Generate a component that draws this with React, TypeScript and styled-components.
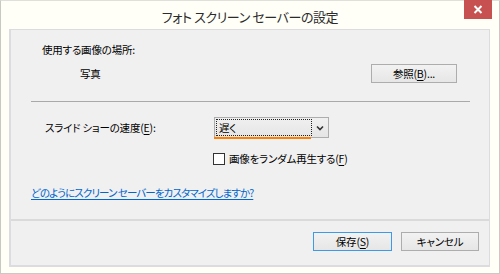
import React from "react";
import styled, { createGlobalStyle } from "styled-components";

const Global = createGlobalStyle`
  html, body { margin: 0; padding: 0; }
  body {
    width: 500px; height: 274px; overflow: hidden;
    font-family: "Noto Sans CJK JP", "Noto Sans", sans-serif;
    font-feature-settings: "palt";
    color: #000;
  }
`;

const Window = styled.div`
  box-sizing: border-box;
  width: 500px;
  height: 274px;
  background: #fffff7;
  border: 1px solid #c9c9c4;
  border-top-color: #e0e0da;
  display: flex;
  flex-direction: column;
`;

const TitleBar = styled.div`
  height: 28px;
  display: grid;
  grid-template-columns: 1fr auto 1fr;
  align-items: start;
`;

const Title = styled.div`
  grid-column: 2;
  font-size: 13px;
  line-height: 14px;
  margin-top: 9px;
  color: #2b2b2b;
  letter-spacing: -0.4px;
`;

const CloseButton = styled.div`
  grid-column: 3;
  justify-self: end;
  margin-right: 7px;
  width: 28px;
  height: 19px;
  margin-top: -1px;
  background: #c75050;
  display: flex;
  align-items: center;
  justify-content: center;
`;

const Panel = styled.div`
  box-sizing: border-box;
  margin: 0 9px 0 8px;
  height: 238px;
  background: #f0f0f0;
  border: 1px solid #dcdce0;
  border-left-width: 2px;
  border-bottom-width: 2px;
  display: flex;
  flex-direction: column;
`;

const Content = styled.div`
  flex: 1;
  display: flex;
  flex-direction: column;
  font-size: 10.5px;
  letter-spacing: -0.2px;
`;

const Row = styled.div<{ $top: number; $h: number; $left: number; $right?: number }>`
  display: flex;
  align-items: center;
  margin-top: ${(p) => p.$top}px;
  height: ${(p) => p.$h}px;
  padding-left: ${(p) => p.$left}px;
  padding-right: ${(p) => p.$right ?? 0}px;
`;

const Text = styled.span<{ $w?: number }>`
  line-height: 14px;
  white-space: nowrap;
  ${(p) => (p.$w ? `width: ${p.$w}px;` : "")}
`;

const Spacer = styled.div`
  flex: 1;
`;

const Separator = styled.div`
  height: 1px;
  margin: 17px 19px 0 20px;
  background: #a9a9a9;
`;

const PushButton = styled.div<{ $w: number; $default?: boolean }>`
  box-sizing: border-box;
  width: ${(p) => p.$w}px;
  height: 19px;
  border: 1px solid ${(p) => (p.$default ? "#3c9ae8" : "#adadad")};
  background: linear-gradient(#f2f2f2, #e6e6e6);
  display: flex;
  align-items: center;
  justify-content: center;
  font-size: 10.5px;
  letter-spacing: -0.2px;
  line-height: 14px;
  color: #000;
`;

const U = styled.span`
  text-decoration: underline;
  text-underline-offset: 2px;
`;

const Combo = styled.div`
  position: relative;
  box-sizing: border-box;
  width: 115px;
  height: 21px;
  border: 1px solid #adadad;
  background: linear-gradient(#f0f0f0, #e5e5e5);
  display: flex;
  align-items: center;
  padding: 1px;
`;

const ComboValue = styled.div`
  box-sizing: border-box;
  width: 96px;
  height: 17px;
  border: 1px dotted #222;
  display: flex;
  align-items: center;
  padding-left: 2px;
`;

const ComboArrow = styled.div`
  flex: 1;
  display: flex;
  align-items: center;
  justify-content: center;
`;

const Highlight = styled.div`
  position: absolute;
  left: -1px;
  bottom: -2px;
  width: 97px;
  height: 2px;
  background: #ff8000;
`;

const Checkbox = styled.div`
  box-sizing: border-box;
  width: 12px;
  height: 12px;
  border: 1px solid #333;
  background: #fff;
  margin-right: 4px;
`;

const Link = styled.span`
  color: #0066cc;
  text-decoration: underline;
  text-underline-offset: 2px;
  line-height: 14px;
  white-space: nowrap;
  letter-spacing: -0.9px;
`;

const Footer = styled.div`
  height: 46px;
  box-sizing: border-box;
  border-top: 2px solid #dadada;
  display: flex;
  justify-content: flex-end;
  gap: 9px;
  padding: 11px 10px 0 0;
`;

export default function App() {
  return (
    <>
      <Global />
      <Window>
        <TitleBar>
          <Title>フォト スクリーン セーバーの設定</Title>
          <CloseButton>
            <svg width="10" height="9" viewBox="0 0 10 9">
              <path d="M1.5 1 L8.5 8 M8.5 1 L1.5 8" stroke="#fff" strokeWidth="2" />
            </svg>
          </CloseButton>
        </TitleBar>
        <Panel>
          <Content>
            <Row $top={10} $h={20} $left={31}>
              <Text>使用する画像の場所:</Text>
            </Row>
            <Row $top={3} $h={21} $left={69} $right={32}>
              <Text>写真</Text>
              <Spacer />
              <PushButton $w={86}>
                参照(<U>B</U>)...
              </PushButton>
            </Row>
            <Separator />
            <Row $top={15} $h={21} $left={34}>
              <Text $w={169}>
                スライド ショーの速度(<U>E</U>):
              </Text>
              <Combo>
                <ComboValue>遅く</ComboValue>
                <ComboArrow>
                  <svg width="8" height="6" viewBox="0 0 8 6">
                    <path d="M1 1.5 L4 4.5 L7 1.5" stroke="#333" strokeWidth="1.6" fill="none" />
                  </svg>
                </ComboArrow>
                <Highlight />
              </Combo>
            </Row>
            <Row $top={14} $h={14} $left={202}>
              <Checkbox />
              <Text>
                画像をランダム再生する(<U>F</U>)
              </Text>
            </Row>
            <Row $top={20} $h={14} $left={20}>
              <Link>どのようにスクリーン セーバーをカスタマイズしますか?</Link>
            </Row>
          </Content>
          <Footer>
            <PushButton $w={79} $default>
              保存(<U>S</U>)
            </PushButton>
            <PushButton $w={78}>キャンセル</PushButton>
          </Footer>
        </Panel>
      </Window>
    </>
  );
}
